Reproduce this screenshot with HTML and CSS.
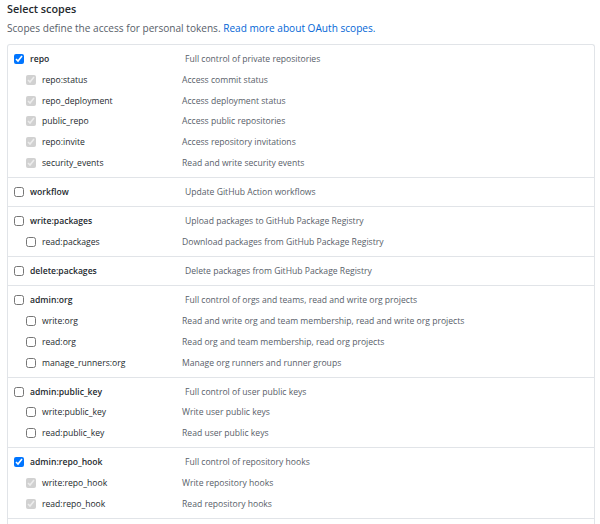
FILE: index.html
```html
<!DOCTYPE html>
<html>
<head>
<meta charset="utf-8">
<link rel="stylesheet" href="styles.css">
</head>
<body>
<div class="page">
  <h3 class="title">Select scopes</h3>
  <p class="note">Scopes define the access for personal tokens. <a href="#" class="link">Read more about OAuth scopes.</a></p>
  <div class="box">
    <div class="section">
      <div class="row parent"><span class="name"><input type="checkbox" checked><span>repo</span></span><span class="desc">Full control of private repositories</span></div>
      <div class="row child"><span class="name"><input type="checkbox" checked disabled><span>repo:status</span></span><span class="desc">Access commit status</span></div>
      <div class="row child"><span class="name"><input type="checkbox" checked disabled><span>repo_deployment</span></span><span class="desc">Access deployment status</span></div>
      <div class="row child"><span class="name"><input type="checkbox" checked disabled><span>public_repo</span></span><span class="desc">Access public repositories</span></div>
      <div class="row child"><span class="name"><input type="checkbox" checked disabled><span>repo:invite</span></span><span class="desc">Access repository invitations</span></div>
      <div class="row child"><span class="name"><input type="checkbox" checked disabled><span>security_events</span></span><span class="desc">Read and write security events</span></div>
    </div>
    <div class="section">
      <div class="row parent"><span class="name"><input type="checkbox"><span>workflow</span></span><span class="desc">Update GitHub Action workflows</span></div>
    </div>
    <div class="section">
      <div class="row parent"><span class="name"><input type="checkbox"><span>write:packages</span></span><span class="desc">Upload packages to GitHub Package Registry</span></div>
      <div class="row child"><span class="name"><input type="checkbox"><span>read:packages</span></span><span class="desc">Download packages from GitHub Package Registry</span></div>
    </div>
    <div class="section">
      <div class="row parent"><span class="name"><input type="checkbox"><span>delete:packages</span></span><span class="desc">Delete packages from GitHub Package Registry</span></div>
    </div>
    <div class="section">
      <div class="row parent"><span class="name"><input type="checkbox"><span>admin:org</span></span><span class="desc">Full control of orgs and teams, read and write org projects</span></div>
      <div class="row child"><span class="name"><input type="checkbox"><span>write:org</span></span><span class="desc">Read and write org and team membership, read and write org projects</span></div>
      <div class="row child"><span class="name"><input type="checkbox"><span>read:org</span></span><span class="desc">Read org and team membership, read org projects</span></div>
      <div class="row child"><span class="name"><input type="checkbox"><span>manage_runners:org</span></span><span class="desc">Manage org runners and runner groups</span></div>
    </div>
    <div class="section">
      <div class="row parent"><span class="name"><input type="checkbox"><span>admin:public_key</span></span><span class="desc">Full control of user public keys</span></div>
      <div class="row child"><span class="name"><input type="checkbox"><span>write:public_key</span></span><span class="desc">Write user public keys</span></div>
      <div class="row child"><span class="name"><input type="checkbox"><span>read:public_key</span></span><span class="desc">Read user public keys</span></div>
    </div>
    <div class="section">
      <div class="row parent"><span class="name"><input type="checkbox" checked><span>admin:repo_hook</span></span><span class="desc">Full control of repository hooks</span></div>
      <div class="row child"><span class="name"><input type="checkbox" checked disabled><span>write:repo_hook</span></span><span class="desc">Write repository hooks</span></div>
      <div class="row child"><span class="name"><input type="checkbox" checked disabled><span>read:repo_hook</span></span><span class="desc">Read repository hooks</span></div>
    </div>
  </div>
</div>
</body>
</html>
```
FILE: styles.css
```css
html, body {
  margin: 0;
  padding: 0;
  background: #ffffff;
}
body {
  font-family: "Open Sans", "Noto Sans", "Liberation Sans", sans-serif;
  color: #24292e;
  font-size: 8.6px;
}
.page {
  padding: 0 5px 0 7px;
}
.title {
  margin: 0;
  font-size: 10.8px;
  font-weight: 600;
  line-height: 18px;
  color: #24292e;
}
.note {
  margin: 3px 0 0;
  line-height: 14px;
  font-size: 10.1px;
  color: #586069;
}
.link {
  color: #0366d6;
  text-decoration: none;
}
.box {
  margin-top: 9px;
  border: 1px solid #e1e4e8;
  border-bottom: none;
  border-radius: 3px 3px 0 0;
  height: 600px;
}
.section {
  padding: 3.65px 0;
  border-top: 1px solid #e1e4e8;
}
.section:first-child {
  border-top: none;
}
.section:last-child {
  border-bottom: 1px solid #e1e4e8;
}
.row {
  display: flex;
  align-items: center;
  height: 20.8px;
}
.name {
  display: flex;
  align-items: center;
  gap: 6px;
  box-sizing: border-box;
}
.parent .name {
  width: 177px;
  padding-left: 6px;
  font-weight: 600;
}
.child .name {
  width: 174px;
  padding-left: 18px;
}
.name input {
  margin: 0;
  width: 10px;
  height: 10px;
}
.desc {
  color: #586069;
}
```
